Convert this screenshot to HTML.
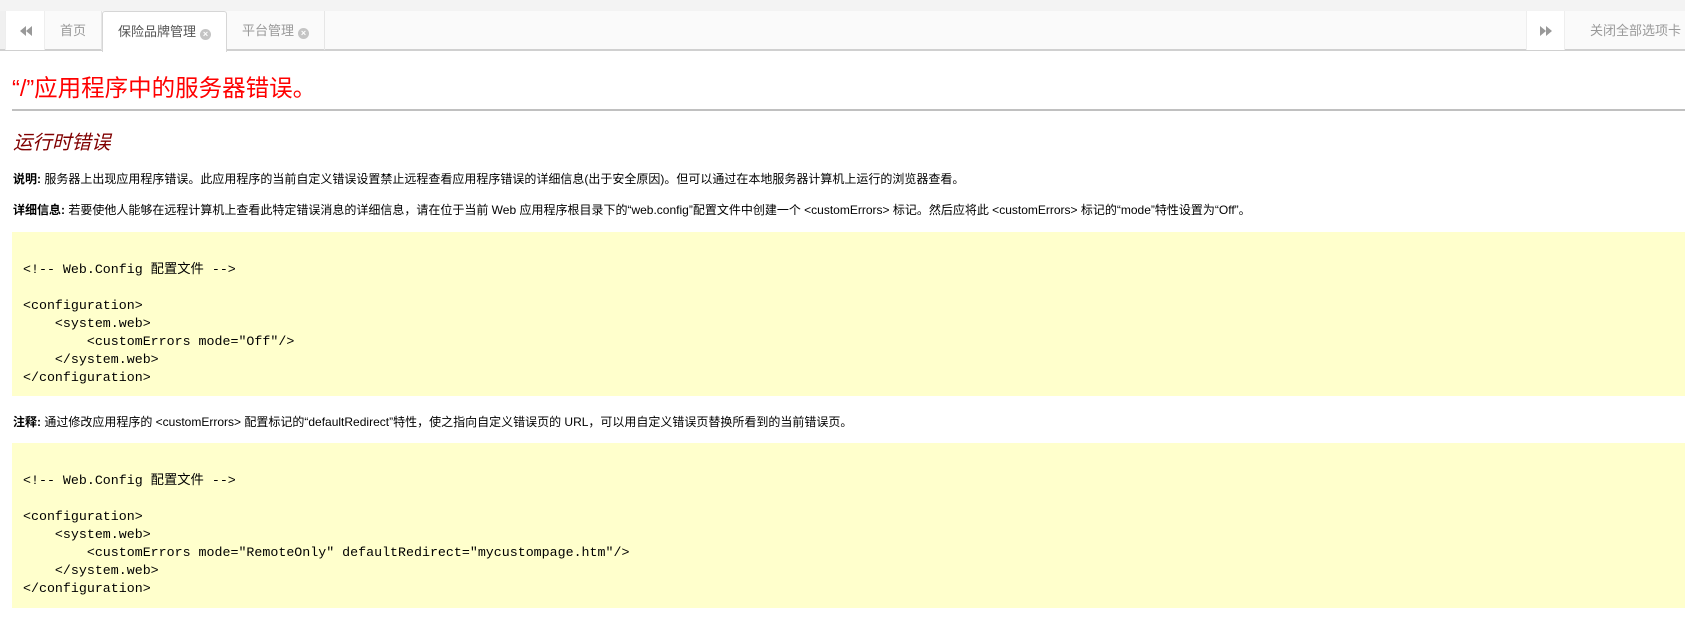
<!DOCTYPE html>
<html><head><meta charset="utf-8">
<style>
*{margin:0;padding:0;box-sizing:border-box}
html,body{width:1685px;height:625px;overflow:hidden;background:#fff}
body{font-family:"Liberation Sans","Noto Sans CJK SC",sans-serif;position:relative}
.top{position:absolute;left:0;top:0;width:1685px;height:11px;background:#f3f3f3}
.bar{position:absolute;left:0;top:11px;width:1685px;height:40px;background:#fafafa;border-bottom:2px solid #d0d0d0}
.lb{position:absolute;left:0;top:11px;width:5px;height:38px;background:#f0f0f0}
.btn{position:absolute;top:11px;height:39px;background:#fff;border-right:1px solid #eee;border-left:1px solid #eee}
.tab{position:absolute;top:11px;height:39px;line-height:39px;font-size:13px;color:#999;text-align:center;border-right:1px solid #e6e6e6}
.tab.act{background:#fff;color:#555;border:1px solid #d6d6d6;border-bottom:none;border-radius:3px 3px 0 0;height:41px;top:11px}
.x{display:inline-block;width:11px;height:11px;border-radius:50%;background:#c4c4c4;color:#fff;font-size:9px;line-height:11px;text-align:center;vertical-align:-1px;margin-left:4px;font-weight:bold}
h1{position:absolute;left:12px;top:69px;font-size:23.5px;font-weight:normal;color:#f00;white-space:nowrap}
.hr{position:absolute;left:12px;right:0;top:109px;height:2px;background:#c0c0c0}
h2{position:absolute;left:13px;top:126px;font-size:19.5px;font-weight:normal;font-style:italic;color:#800000}
p{position:absolute;left:13px;font-size:12px;color:#000;white-space:nowrap}
.box{position:absolute;left:12px;right:0;background:#ffffcc;padding:11px 11px 9px}
pre{font-family:"Liberation Mono","Noto Sans CJK SC",monospace;font-size:13.3px;line-height:18px;color:#000}
</style></head><body>
<div class="top"></div>
<div class="bar"></div>
<div class="lb"></div>
<div class="btn" style="left:5px;width:40px"><svg width="40" height="39"><path d="M14 20l6-5v10zM20 20l6-5v10z" fill="#999"/></svg></div>
<div class="tab" style="left:45px;width:57px">首页</div>
<div class="tab act" style="left:102px;width:125px">保险品牌管理<span class="x">×</span></div>
<div class="tab" style="left:227px;width:98px">平台管理<span class="x">×</span></div>
<div class="btn" style="left:1526px;width:39px"><svg width="39" height="39"><path d="M13 15l6 5-6 5zM19 15l6 5-6 5z" fill="#999"/></svg></div>
<div class="tab" style="left:1565px;width:120px;border:none;color:#999;text-align:left;padding-left:25px">关闭全部选项卡</div>

<h1>“/”应用程序中的服务器错误。</h1>
<div class="hr"></div>
<h2>运行时错误</h2>
<p style="top:170px"><b>说明:</b> 服务器上出现应用程序错误。此应用程序的当前自定义错误设置禁止远程查看应用程序错误的详细信息(出于安全原因)。但可以通过在本地服务器计算机上运行的浏览器查看。</p>
<p style="top:201px"><b>详细信息:</b> 若要使他人能够在远程计算机上查看此特定错误消息的详细信息，请在位于当前 Web 应用程序根目录下的“web.config”配置文件中创建一个 &lt;customErrors&gt; 标记。然后应将此 &lt;customErrors&gt; 标记的“mode”特性设置为“Off”。</p>
<div class="box" style="top:232px;height:164px"><pre>

&lt;!-- Web.Config 配置文件 --&gt;

&lt;configuration&gt;
    &lt;system.web&gt;
        &lt;customErrors mode="Off"/&gt;
    &lt;/system.web&gt;
&lt;/configuration&gt;</pre></div>
<p style="top:413px"><b>注释:</b> 通过修改应用程序的 &lt;customErrors&gt; 配置标记的“defaultRedirect”特性，使之指向自定义错误页的 URL，可以用自定义错误页替换所看到的当前错误页。</p>
<div class="box" style="top:443px;height:165px"><pre>

&lt;!-- Web.Config 配置文件 --&gt;

&lt;configuration&gt;
    &lt;system.web&gt;
        &lt;customErrors mode="RemoteOnly" defaultRedirect="mycustompage.htm"/&gt;
    &lt;/system.web&gt;
&lt;/configuration&gt;</pre></div>
</body></html>
